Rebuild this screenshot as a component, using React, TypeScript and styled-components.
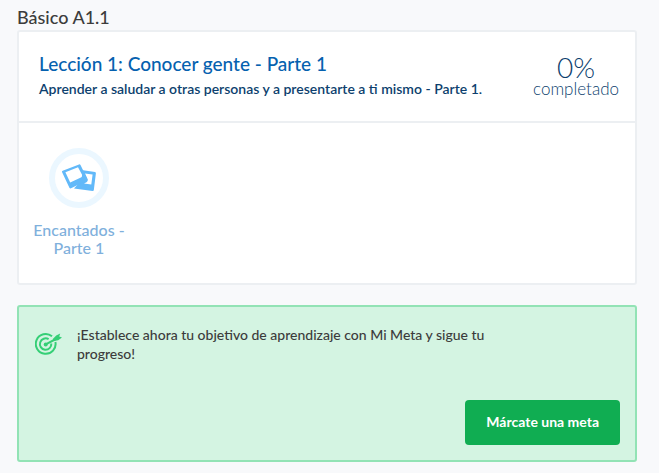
import React from "react";
import styled, { createGlobalStyle } from "styled-components";

const GlobalStyle = createGlobalStyle`
  *, *::before, *::after { box-sizing: border-box; }
  body {
    margin: 0;
    background: #f8f9fb;
    color: #3c3c3c;
    font-family: Lato, "Open Sans", sans-serif;
  }
  h1, h2, p { margin: 0; }
`;

const Page = styled.main`
  padding: 6px 22px 11px 17px;
`;

const LevelTitle = styled.h1`
  margin-bottom: 1px;
  font-size: 18px;
  line-height: 23px;
  font-weight: 500;
`;

const LessonCard = styled.section`
  background: #fff;
  border: 2px solid #eceff2;
  border-radius: 3px;
`;

const LessonHeader = styled.header`
  display: flex;
  justify-content: space-between;
  padding: 19px 16px 21px 20px;
  border-bottom: 2px solid #eceff2;
`;

const LessonTitle = styled.h2`
  color: #0561af;
  font-size: 19px;
  line-height: 26px;
  font-weight: 500;
`;

const LessonSummary = styled.p`
  color: #0d3f6e;
  font-size: 14px;
  line-height: 23px;
  font-weight: 600;
`;

const Progress = styled.div`
  flex: none;
  padding-top: 2px;
  color: #0d3f6e;
  font-weight: 300;
  text-align: center;
`;

const Percent = styled.div`
  font-size: 28px;
  line-height: 28px;
`;

const ProgressLabel = styled.div`
  font-size: 17px;
  line-height: 16px;
`;

const Activities = styled.div`
  display: flex;
  padding: 25px 10px 26px;
`;

const Activity = styled.a`
  display: flex;
  flex-direction: column;
  align-items: center;
  gap: 13px;
  width: 100px;
  color: #7fb0dc;
  font-size: 16px;
  line-height: 18px;
  font-weight: 500;
  text-align: center;
  text-decoration: none;
`;

const ActivityIcon = styled.span`
  display: block;
  width: 60px;
  height: 60px;
  border: 6px solid #ebf7ff;
  border-radius: 50%;

  svg { display: block; }
`;

const GoalBanner = styled.section`
  display: flex;
  flex-direction: column;
  gap: 37px;
  margin-top: 20px;
  padding: 18px 15px 15px 16px;
  background: #d4f4e2;
  border: 2px solid #92e3b5;
  border-radius: 3px;
`;

const GoalMessage = styled.div`
  display: flex;
  align-items: center;
  gap: 15px;

  svg { flex: none; }
`;

const GoalText = styled.p`
  max-width: 420px;
  font-size: 14px;
  line-height: 19px;
  font-weight: 500;
`;

const GoalButton = styled.button`
  align-self: flex-end;
  padding: 12px 21px 14px;
  border: 0;
  border-radius: 4px;
  background: #10ad52;
  color: #fff;
  font-family: inherit;
  font-size: 14px;
  line-height: 19px;
  font-weight: 700;
  cursor: pointer;
`;

const PhotosIcon = () => (
  <svg width="48" height="48" viewBox="6 6 48 48" aria-hidden="true">
    <g fill="#62b9f9" fillRule="evenodd">
      <path d="M34 22.3 46 24Q47 24.2 46.9 25.2L44.8 42.3Q44.6 43.2 43.6 43.1L25 40.6 32 33ZM36 25.4 38.7 31.5Q39.2 33.2 37.5 34.3L35 35.6 42.3 36.4 43.6 26.6Z" />
      <path d="M13.7 22.7 30 16.4Q31 16.1 31.5 17L38.4 31Q38.7 32 37.9 32.5L22 40.3Q21 40.7 20.4 39.8L13 24Q12.7 23.1 13.7 22.7ZM16.4 24.2 21.2 34.4 34 28.4 29 19.2Z" />
    </g>
  </svg>
);

const TargetIcon = () => (
  <svg width="27" height="24" viewBox="0 0 27 24" aria-hidden="true">
    <g fill="none" stroke="#35cf76" strokeWidth="2">
      <path d="M17 4.3A9.9 9.9 0 1 0 20.4 10" />
      <path d="M13.6 7.2A5.7 5.7 0 1 0 16.3 11.5" />
      <path d="M10.7 12.3 21 7" strokeLinecap="round" />
    </g>
    <circle cx="10.7" cy="12.5" r="2" fill="#35cf76" />
    <path fill="#35cf76" d="M17.8 7 21.2 3.4 25.2 1.6 24.2 4.5 27 5.4 23.2 8.3 18.8 8.9Z" />
  </svg>
);

export default function App() {
  return (
    <>
      <GlobalStyle />
      <Page>
        <LevelTitle>Básico A1.1</LevelTitle>
        <LessonCard>
          <LessonHeader>
            <div>
              <LessonTitle>Lección 1: Conocer gente - Parte 1</LessonTitle>
              <LessonSummary>
                Aprender a saludar a otras personas y a presentarte a ti mismo - Parte 1.
              </LessonSummary>
            </div>
            <Progress>
              <Percent>0%</Percent>
              <ProgressLabel>completado</ProgressLabel>
            </Progress>
          </LessonHeader>
          <Activities>
            <Activity href="#encantados">
              <ActivityIcon>
                <PhotosIcon />
              </ActivityIcon>
              <span>Encantados - Parte 1</span>
            </Activity>
          </Activities>
        </LessonCard>
        <GoalBanner>
          <GoalMessage>
            <TargetIcon />
            <GoalText>
              ¡Establece ahora tu objetivo de aprendizaje con Mi Meta y sigue tu progreso!
            </GoalText>
          </GoalMessage>
          <GoalButton type="button">Márcate una meta</GoalButton>
        </GoalBanner>
      </Page>
    </>
  );
}
